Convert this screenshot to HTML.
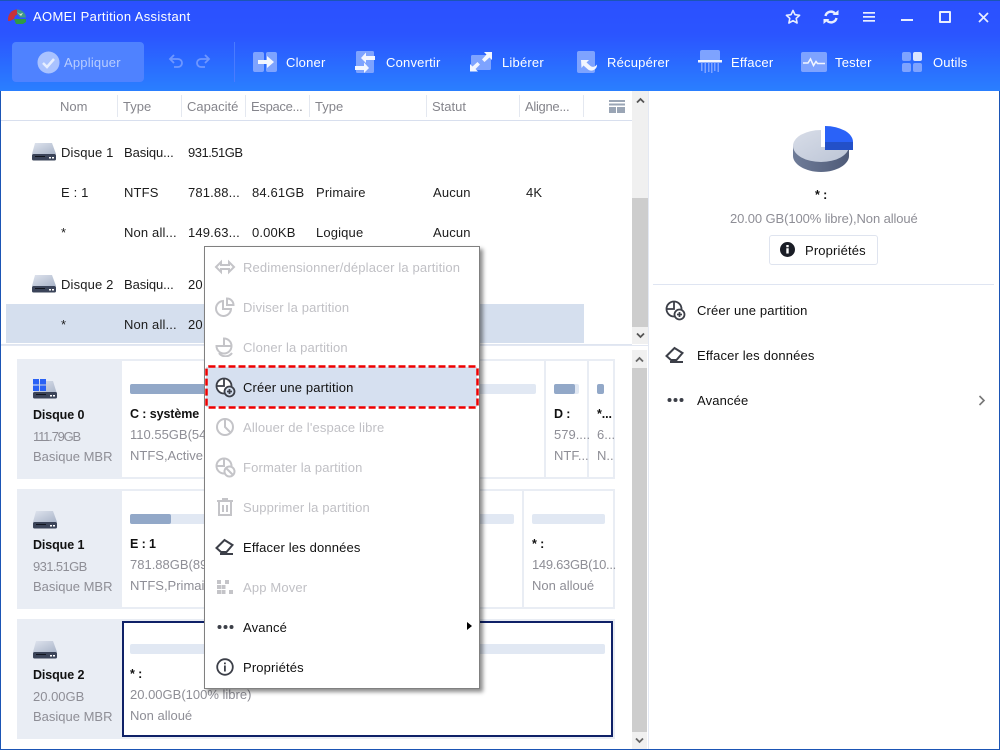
<!DOCTYPE html>
<html lang="fr"><head><meta charset="utf-8"><title>AOMEI Partition Assistant</title>
<style>
html,body{margin:0;padding:0;width:1000px;height:750px;overflow:hidden;background:#fff}
#a{position:relative;width:1000px;height:750px;overflow:hidden;background:#fff;font-family:"Liberation Sans",sans-serif;font-size:13px;letter-spacing:.15px;color:#1c1c1c}
#a div,#a svg{position:absolute}
.t{position:absolute;line-height:20px;height:20px;white-space:nowrap}
.g{color:#8e8e96;letter-spacing:0}
.h{color:#85858c;letter-spacing:0}
.w{color:#fff;letter-spacing:.2px}
.d{color:#c0c0c5}
.b{font-weight:bold;font-size:12.5px;letter-spacing:-.1px;color:#111}
.card{background:#e9edf4}
.p{background:#fff}
.tr{background:#e1e8f3;border-radius:2px}
.fl{background:#92a8c8;border-radius:2px}
.sep{background:#e4e8f0;width:1px;top:95px;height:22px}
</style></head><body><div id="a">

<div style="left:0;top:0;width:1000px;height:91px;background:linear-gradient(#2b50ff 0,#2b55ff 35px,#2a7fff 91px)"></div>
<div style="left:0;top:0;width:1000px;height:1px;background:#1b55b5"></div>
<div style="left:0;top:91px;width:1px;height:659px;background:#1b55b5"></div>
<div style="left:999px;top:91px;width:1px;height:659px;background:#1b55b5"></div>
<div style="left:0;top:749px;width:1000px;height:1px;background:#1b55b5"></div>

<svg style="left:7px;top:8px" width="20" height="17" viewBox="0 0 20 17"><path d="M1 13C.5 6 5 1.500 10 1.500L12 5 8 8 7 11 3 13z" fill="#c8323a"/><path d="M10 1.500c5 0 8.500 3.500 9 8l-6 0-3-4z" fill="#3e9a8a"/><path d="M7 11h12v3l-3 2H9z" fill="#2f9a45"/><path d="M10 4l3 2 3-1-2 3z" fill="#dfe8c8"/></svg>
<span class="t w" style="left:33px;top:7px;letter-spacing:.35px">AOMEI Partition Assistant</span>

<svg style="left:785px;top:9px" width="16" height="16" viewBox="0 0 16 16"><path d="M8 1.500l2 4.200 4.600.6-3.400 3.100.9 4.600L8 11.700 3.900 14l.9-4.600L1.400 6.300 6 5.700z" fill="none" stroke="#e8eeff" stroke-width="1.600" stroke-linejoin="round"/></svg>
<svg style="left:823px;top:9px" width="16" height="16" viewBox="0 0 16 16" fill="none" stroke="#e8eeff" stroke-width="2.400"><path d="M2.500 7A5.500 5.500 0 0 1 12 4.500"/><path d="M13.500 9A5.500 5.500 0 0 1 4 11.500"/><path d="M9.500 6h6V1z" fill="#e8eeff" stroke="none"/><path d="M6.500 10h-6v5z" fill="#e8eeff" stroke="none"/></svg>
<svg style="left:863px;top:11px" width="12" height="12" viewBox="0 0 12 12" fill="#e8eeff"><rect y="1" width="12" height="1.700"/><rect y="5" width="12" height="1.700"/><rect y="9" width="12" height="1.700"/></svg>
<div style="left:901px;top:19px;width:12px;height:2px;background:#e8eeff"></div>
<div style="left:939px;top:11px;width:8px;height:8px;border:2px solid #e8eeff;border-radius:1px"></div>
<svg style="left:978px;top:12px" width="11" height="11" viewBox="0 0 11 11"><path d="M1 1l9 9M10 1l-9 9" stroke="#e8eeff" stroke-width="1.700"/></svg>

<div style="left:12px;top:42px;width:132px;height:40px;background:#4f82ff;border-radius:4px"></div>
<svg style="left:37px;top:51px" width="23" height="23" viewBox="0 0 23 23"><circle cx="11.500" cy="11.500" r="11" fill="#a9c2ff"/><path d="M6 12l4 4 7-8" fill="none" stroke="#e6eeff" stroke-width="2.500"/></svg>
<span class="t" style="left:64px;top:53px;color:#b9cdff;letter-spacing:.2px">Appliquer</span>
<svg style="left:168px;top:54px" width="17" height="15" viewBox="0 0 17 15" fill="none" stroke="#6f97ff" stroke-width="1.800"><path d="M2 5h8a4 4 0 0 1 0 8H6"/><path d="M6 1L2 5l4 4"/></svg>
<svg style="left:194px;top:54px" width="17" height="15" viewBox="0 0 17 15" fill="none" stroke="#6f97ff" stroke-width="1.800"><path d="M15 5H7a4 4 0 0 0 0 8h4"/><path d="M11 1l4 4-4 4"/></svg>
<div style="left:234px;top:42px;width:1px;height:40px;background:#4a7bff"></div>

<svg style="left:253px;top:52px" width="25" height="21" viewBox="0 0 25 21"><rect x="0" y="0" width="11" height="20" rx="2" fill="#7ea3ff"/><rect x="13" y="0" width="11" height="20" rx="2" fill="#7ea3ff"/><path d="M5 8h9V4l7 6-7 6v-4H5z" fill="#f3f6ff"/></svg>
<span class="t w" style="left:286px;top:53px">Cloner</span>
<svg style="left:355px;top:51px" width="21" height="23" viewBox="0 0 21 23"><rect x="1" y="0" width="18" height="22" rx="1.500" fill="#7ea3ff"/><path d="M20 5h-9V1.500L6 7l5 5V9h9zM0 15h9v-3.500L14 17l-5 5v-3H0z" fill="#f3f6ff"/></svg>
<span class="t w" style="left:386px;top:53px">Convertir</span>
<svg style="left:470px;top:52px" width="22" height="20" viewBox="0 0 22 20"><rect x="1" y="3" width="20" height="15" rx="1.500" fill="#7ea3ff"/><path d="M14 0h8v8l-2.500-2.500-5 4.500-2.500-2.500 4.500-5zM0 12l2.500 2.500 5-4.500L10 12.500 5.500 17 8 19.500H0z" fill="#f3f6ff"/></svg>
<span class="t w" style="left:502px;top:53px">Libérer</span>
<svg style="left:577px;top:51px" width="22" height="23" viewBox="0 0 22 23"><rect x="0" y="0" width="18" height="22" rx="2" fill="#7ea3ff"/><path d="M4 9h8l-2.500 2.500 4 3.500c2 1.500 4.500 1 6.500-1.500.5 4.500-5 8-9 5l-4.500-4L4.500 17z" fill="#f3f6ff"/></svg>
<span class="t w" style="left:607px;top:53px">Récupérer</span>
<svg style="left:698px;top:50px" width="24" height="24" viewBox="0 0 24 24"><rect x="2" y="0" width="20" height="11" rx="2" fill="#7ea3ff"/><rect x="0" y="10" width="24" height="2.500" fill="#f3f6ff"/><path d="M3 13h1.500v8H3zM6.500 13H8v10H6.500zM10 13h1.500v9H10zM13 13h1.500v10H13zM16 13h1.500v8H16zM19.500 13H21v9h-1.500z" fill="#7ea3ff"/></svg>
<span class="t w" style="left:731px;top:53px">Effacer</span>
<svg style="left:801px;top:52px" width="26" height="20" viewBox="0 0 26 20"><rect width="26" height="20" rx="2" fill="#7ea3ff"/><path d="M2 11h5l2.500-4 3 6.500 2.500-4 1.500 2H24" fill="none" stroke="#f3f6ff" stroke-width="1.500"/></svg>
<span class="t w" style="left:835px;top:53px">Tester</span>
<svg style="left:902px;top:52px" width="20" height="20" viewBox="0 0 20 20"><rect width="9" height="9" rx="2" fill="#7ea3ff"/><rect x="11" width="9" height="9" rx="2" fill="#dbe5ff"/><rect y="11" width="9" height="9" rx="2" fill="#7ea3ff"/><rect x="11" y="11" width="9" height="9" rx="2" fill="#7ea3ff"/></svg>
<span class="t w" style="left:933px;top:53px">Outils</span>

<div style="left:1px;top:120px;width:631px;height:1px;background:#d8dfee"></div>
<div class="sep" style="left:117px"></div><div class="sep" style="left:181px"></div><div class="sep" style="left:245px"></div><div class="sep" style="left:309px"></div><div class="sep" style="left:426px"></div><div class="sep" style="left:519px"></div><div class="sep" style="left:583px"></div>
<span class="t h" style="left:60px;top:97px">Nom</span>
<span class="t h" style="left:123px;top:97px">Type</span>
<span class="t h" style="left:187px;top:97px">Capacité</span>
<span class="t h" style="left:251px;top:97px;letter-spacing:-.3px">Espace...</span>
<span class="t h" style="left:315px;top:97px">Type</span>
<span class="t h" style="left:432px;top:97px">Statut</span>
<span class="t h" style="left:525px;top:97px;letter-spacing:-.3px">Aligne...</span>
<svg style="left:609px;top:100px" width="16" height="13" viewBox="0 0 16 13" fill="#9aa5b5"><rect width="16" height="2"/><rect y="3.500" width="16" height="2"/><rect y="7" width="7" height="6"/><rect x="8" y="7" width="8" height="6"/></svg>

<div style="left:6px;top:304px;width:578px;height:39px;background:#d5dfee"></div>
<div style="left:1px;top:344px;width:631px;height:1px;background:#dfe5f0"></div>

<svg style="left:32px;top:143px" width="24" height="18" viewBox="0 0 24 18"><defs><linearGradient id="dk" x1="0" y1="0" x2="1" y2="1"><stop offset="0" stop-color="#dfe4ee"/><stop offset="1" stop-color="#a9b4c8"/></linearGradient></defs><path d="M3 0h17l4 11H0z" fill="url(#dk)"/><rect y="11" width="24" height="6.500" rx="1.500" fill="#3b4459"/><rect x="3" y="13" width="10" height="1" fill="#11151f"/><rect x="17" y="14" width="2" height="1.500" fill="#fff"/><rect x="20" y="14" width="2" height="1.500" fill="#fff"/></svg>
<svg style="left:32px;top:275px" width="24" height="18" viewBox="0 0 24 18"><path d="M3 0h17l4 11H0z" fill="url(#dk)"/><rect y="11" width="24" height="6.500" rx="1.500" fill="#3b4459"/><rect x="3" y="13" width="10" height="1" fill="#11151f"/><rect x="17" y="14" width="2" height="1.500" fill="#fff"/><rect x="20" y="14" width="2" height="1.500" fill="#fff"/></svg>

<span class="t" style="left:61px;top:143px">Disque 1</span><span class="t" style="left:124px;top:143px;letter-spacing:-.1px">Basiqu...</span><span class="t" style="left:188px;top:143px;letter-spacing:-.5px">931.51GB</span>
<span class="t" style="left:61px;top:183px">E : 1</span><span class="t" style="left:124px;top:183px">NTFS</span><span class="t" style="left:188px;top:183px">781.88...</span><span class="t" style="left:252px;top:183px">84.61GB</span><span class="t" style="left:316px;top:183px">Primaire</span><span class="t" style="left:433px;top:183px">Aucun</span><span class="t" style="left:526px;top:183px">4K</span>
<span class="t" style="left:61px;top:223px">*</span><span class="t" style="left:124px;top:223px">Non all...</span><span class="t" style="left:188px;top:223px">149.63...</span><span class="t" style="left:252px;top:223px">0.00KB</span><span class="t" style="left:316px;top:223px">Logique</span><span class="t" style="left:433px;top:223px">Aucun</span>
<span class="t" style="left:61px;top:275px">Disque 2</span><span class="t" style="left:124px;top:275px;letter-spacing:-.1px">Basiqu...</span><span class="t" style="left:188px;top:275px">20.00GB</span>
<span class="t" style="left:61px;top:315px">*</span><span class="t" style="left:124px;top:315px">Non all...</span><span class="t" style="left:188px;top:315px">20.00GB</span>

<div style="left:632px;top:91px;width:16px;height:253px;background:#f0f0f0"></div>
<div style="left:632px;top:198px;width:16px;height:129px;background:#cdcdcd"></div>
<svg style="left:636px;top:97px" width="9" height="7" viewBox="0 0 9 7"><path d="M1 5.500l3.500-3.500 3.500 3.500" fill="none" stroke="#555" stroke-width="1.800"/></svg>
<svg style="left:636px;top:332px" width="9" height="7" viewBox="0 0 9 7"><path d="M1 1.500l3.500 3.500 3.500-3.500" fill="none" stroke="#555" stroke-width="1.800"/></svg>

<div style="left:648px;top:91px;width:1px;height:658px;background:#e3e8f3"></div>
<div style="left:1px;top:345px;width:647px;height:1px;background:#e3e8f3"></div>

<div class="card" style="left:17px;top:359px;width:598px;height:120px"></div>
<div class="p" style="left:122px;top:361px;width:422px;height:116px"></div>
<div class="p" style="left:546px;top:361px;width:41px;height:116px"></div>
<div class="p" style="left:589px;top:361px;width:24px;height:116px"></div>
<div class="tr" style="left:130px;top:384px;width:406px;height:10px"></div>
<div class="fl" style="left:130px;top:384px;width:190px;height:10px"></div>
<div class="tr" style="left:554px;top:384px;width:25px;height:10px"></div>
<div class="fl" style="left:554px;top:384px;width:21px;height:10px"></div>
<div class="fl" style="left:597px;top:384px;width:7px;height:10px"></div>
<svg style="left:33px;top:379px" width="24" height="20" viewBox="0 0 24 20"><path d="M6 2h14l4 13H0z" fill="url(#dk)"/><rect y="13" width="24" height="6.500" rx="1.500" fill="#3b4459"/><rect x="3" y="15" width="10" height="1" fill="#11151f"/><rect x="17" y="16" width="2" height="1.500" fill="#fff"/><rect x="20" y="16" width="2" height="1.500" fill="#fff"/><path d="M0 0h6v5.500H0zM7 0h6v5.500H7zM0 6.500h6V12H0zM7 6.500h6V12H7z" fill="#2a62f5"/></svg>
<span class="t b" style="left:33px;top:405px">Disque 0</span>
<span class="t g" style="left:33px;top:427px;letter-spacing:-1.200px">111.79GB</span>
<span class="t g" style="left:33px;top:447px">Basique MBR</span>
<span class="t b" style="left:130px;top:404px">C : système</span>
<span class="t g" style="left:130px;top:425px">110.55GB(54%</span>
<span class="t g" style="left:130px;top:446px">NTFS,Active,</span>
<span class="t b" style="left:554px;top:404px">D :</span>
<span class="t g" style="left:554px;top:425px">579....</span>
<span class="t g" style="left:554px;top:446px">NTF...</span>
<span class="t b" style="left:597px;top:404px">*...</span>
<span class="t g" style="left:597px;top:425px">6...</span>
<span class="t g" style="left:597px;top:446px">N..</span>

<div class="card" style="left:17px;top:489px;width:598px;height:120px"></div>
<div class="p" style="left:122px;top:491px;width:400px;height:116px"></div>
<div class="p" style="left:524px;top:491px;width:89px;height:116px"></div>
<div class="tr" style="left:130px;top:514px;width:384px;height:10px"></div>
<div class="fl" style="left:130px;top:514px;width:41px;height:10px"></div>
<div class="tr" style="left:532px;top:514px;width:73px;height:10px"></div>
<svg style="left:33px;top:511px" width="24" height="18" viewBox="0 0 24 18"><path d="M3 0h17l4 11H0z" fill="url(#dk)"/><rect y="11" width="24" height="6.500" rx="1.500" fill="#3b4459"/><rect x="3" y="13" width="10" height="1" fill="#11151f"/><rect x="17" y="14" width="2" height="1.500" fill="#fff"/><rect x="20" y="14" width="2" height="1.500" fill="#fff"/></svg>
<span class="t b" style="left:33px;top:535px">Disque 1</span>
<span class="t g" style="left:33px;top:557px;letter-spacing:-.6px">931.51GB</span>
<span class="t g" style="left:33px;top:577px">Basique MBR</span>
<span class="t b" style="left:130px;top:534px">E : 1</span>
<span class="t g" style="left:130px;top:555px">781.88GB(89</span>
<span class="t g" style="left:130px;top:576px">NTFS,Primai</span>
<span class="t b" style="left:532px;top:534px">* :</span>
<span class="t g" style="left:532px;top:555px;letter-spacing:-.3px">149.63GB(10...</span>
<span class="t g" style="left:532px;top:576px">Non alloué</span>

<div class="card" style="left:17px;top:619px;width:598px;height:120px"></div>
<div class="p" style="left:122px;top:621px;width:487px;height:112px;border:2px solid #0f2167"></div>
<div class="tr" style="left:130px;top:644px;width:475px;height:10px"></div>
<svg style="left:33px;top:641px" width="24" height="18" viewBox="0 0 24 18"><path d="M3 0h17l4 11H0z" fill="url(#dk)"/><rect y="11" width="24" height="6.500" rx="1.500" fill="#3b4459"/><rect x="3" y="13" width="10" height="1" fill="#11151f"/><rect x="17" y="14" width="2" height="1.500" fill="#fff"/><rect x="20" y="14" width="2" height="1.500" fill="#fff"/></svg>
<span class="t b" style="left:33px;top:665px">Disque 2</span>
<span class="t g" style="left:33px;top:687px">20.00GB</span>
<span class="t g" style="left:33px;top:707px">Basique MBR</span>
<span class="t b" style="left:130px;top:664px">* :</span>
<span class="t g" style="left:130px;top:685px">20.00GB(100% libre)</span>
<span class="t g" style="left:130px;top:706px">Non alloué</span>

<div style="left:632px;top:350px;width:15px;height:399px;background:#f0f0f0"></div>
<div style="left:632px;top:368px;width:15px;height:364px;background:#cdcdcd"></div>
<svg style="left:635px;top:356px" width="9" height="7" viewBox="0 0 9 7"><path d="M1 5.500l3.500-3.500 3.500 3.500" fill="none" stroke="#666" stroke-width="1.800"/></svg>
<svg style="left:635px;top:737px" width="9" height="7" viewBox="0 0 9 7"><path d="M1 1.500l3.500 3.500 3.500-3.500" fill="none" stroke="#666" stroke-width="1.800"/></svg>

<div style="left:204px;top:246px;width:274px;height:441px;background:#fff;border:1px solid #808080;box-shadow:3px 3px 4px rgba(0,0,0,.45)"></div>
<div style="left:206px;top:367px;width:271px;height:40px;background:#d6e0f0"></div>
<svg style="left:205px;top:365px" width="274" height="44" viewBox="0 0 274 44"><rect x="1.500" y="1.500" width="271" height="41" rx="2" fill="none" stroke="#ee0000" stroke-width="2.500" stroke-dasharray="7 3"/></svg>

<svg style="left:214px;top:259px" width="22" height="16" viewBox="0 0 22 16" fill="none" stroke="#c4c4c8" stroke-width="2"><path d="M2 8l5-5v3h8V3l5 5-5 5v-3H7v3z"/></svg>
<span class="t d" style="left:243px;top:258px">Redimensionner/déplacer la partition</span>
<svg style="left:215px;top:297px" width="20" height="20" viewBox="0 0 20 20" fill="none" stroke="#c4c4c8" stroke-width="2"><path d="M8 4a7.500 7.500 0 1 0 8 8H8z"/><path d="M12 1.500a6.500 6.500 0 0 1 6.500 6.500H12z"/></svg>
<span class="t d" style="left:243px;top:298px">Diviser la partition</span>
<svg style="left:215px;top:337px" width="20" height="20" viewBox="0 0 20 20" fill="none" stroke="#c4c4c8" stroke-width="2"><path d="M9 1.500a7.500 7.500 0 1 1-7.500 7.500H9z"/><path d="M9 9h7.500"/><path d="M4 16a8 8 0 0 0 13 0"/></svg>
<span class="t d" style="left:243px;top:338px">Cloner la partition</span>
<svg style="left:215px;top:377px" width="21" height="21" viewBox="0 0 21 21" fill="none" stroke="#3c3f48" stroke-width="1.800"><circle cx="9" cy="9" r="7.500" fill="#fff"/><path d="M9 1.500V9H1.500"/><circle cx="14.500" cy="14.500" r="5" fill="#d6e0f0"/><path d="M12 14.500h5M14.500 12v5"/></svg>
<span class="t" style="left:243px;top:378px;color:#111">Créer une partition</span>
<svg style="left:215px;top:417px" width="20" height="20" viewBox="0 0 20 20" fill="none" stroke="#c4c4c8" stroke-width="2"><circle cx="10" cy="10" r="8"/><path d="M10 2v8l5 5"/></svg>
<span class="t d" style="left:243px;top:418px">Allouer de l'espace libre</span>
<svg style="left:215px;top:457px" width="21" height="21" viewBox="0 0 21 21" fill="none" stroke="#c4c4c8" stroke-width="2"><circle cx="9" cy="9" r="7.500"/><path d="M9 1.500V9H1.500"/><circle cx="14.500" cy="14.500" r="5" fill="#fff"/><path d="M11 11l7 7"/></svg>
<span class="t d" style="left:243px;top:458px">Formater la partition</span>
<svg style="left:216px;top:498px" width="18" height="18" viewBox="0 0 18 18" fill="none" stroke="#c4c4c8" stroke-width="2"><path d="M1 3h16M6 1h6M3 3v14h12V3M7 7v7M11 7v7"/></svg>
<span class="t d" style="left:243px;top:498px">Supprimer la partition</span>
<svg style="left:215px;top:538px" width="20" height="18" viewBox="0 0 20 18" fill="none" stroke="#3c3f48" stroke-width="2"><path d="M1.500 10l8-8 8 5-6 7H6z"/><path d="M5 16h13"/></svg>
<span class="t" style="left:243px;top:538px;color:#111">Effacer les données</span>
<svg style="left:217px;top:580px" width="17" height="14" viewBox="0 0 17 14" fill="#c4c4c8"><rect width="4" height="4"/><rect x="8" width="4" height="4"/><rect y="5" width="4" height="4"/><rect x="4.500" y="5" width="4" height="4"/><rect y="10" width="4" height="4"/><rect x="4.500" y="10" width="4" height="4"/><rect x="12" y="10" width="4" height="4"/></svg>
<span class="t d" style="left:243px;top:578px">App Mover</span>
<svg style="left:217px;top:624px" width="17" height="6" viewBox="0 0 17 6" fill="#3c3f48"><circle cx="2.500" cy="3" r="2"/><circle cx="8.500" cy="3" r="2"/><circle cx="14.500" cy="3" r="2"/></svg>
<span class="t" style="left:243px;top:618px;color:#111">Avancé</span>
<svg style="left:467px;top:622px" width="5" height="8" viewBox="0 0 5 8"><path d="M0 0l5 4-5 4z" fill="#000"/></svg>
<svg style="left:216px;top:658px" width="18" height="18" viewBox="0 0 18 18"><circle cx="9" cy="9" r="7.800" fill="none" stroke="#3c3f48" stroke-width="1.800"/><path d="M8 7.500h1.800V13.500H8zM8 4.500h1.800v1.800H8z" fill="#3c3f48"/></svg>
<span class="t" style="left:243px;top:658px;color:#111">Propriétés</span>

<svg style="left:790px;top:124px" width="66" height="50" viewBox="0 0 66 50"><defs><linearGradient id="pt" x1="0" y1="0" x2="1" y2="1"><stop offset="0" stop-color="#d8dde8"/><stop offset="1" stop-color="#bcc5d6"/></linearGradient><linearGradient id="ps" x1="0" y1="0" x2="1" y2="0"><stop offset="0" stop-color="#6f7c98"/><stop offset="1" stop-color="#4f5b78"/></linearGradient></defs><path d="M3 22v10c0 8 12 16 28 16s28-8 28-16V22z" fill="url(#ps)"/><ellipse cx="31" cy="22" rx="28" ry="16" fill="url(#pt)"/><rect x="31" y="0" width="35" height="23" fill="#fff"/><path d="M35 2A28 16 0 0 1 63 18V26H35z" fill="#2a62f8"/><path d="M35 18H63V26H35z" fill="#2350c8"/></svg>
<span class="t b" style="left:815px;top:185px">* :</span>
<span class="t g" style="left:730px;top:209px;letter-spacing:-.1px">20.00 GB(100% libre),Non alloué</span>
<div style="left:769px;top:235px;width:107px;height:28px;border:1px solid #dfe4ef;border-radius:3px;background:#fff"></div>
<svg style="left:780px;top:242px" width="15" height="15" viewBox="0 0 15 15"><circle cx="7.500" cy="7.500" r="7.500" fill="#1a1d26"/><path d="M6.300 6.200h2.400v5.300H6.300zM6.300 3h2.400v2.200H6.300z" fill="#fff"/></svg>
<span class="t" style="left:805px;top:241px;color:#111">Propriétés</span>
<div style="left:653px;top:284px;width:341px;height:1px;background:#dfe5f2"></div>

<svg style="left:665px;top:300px" width="21" height="21" viewBox="0 0 21 21" fill="none" stroke="#3c3f48" stroke-width="1.800"><circle cx="9" cy="9" r="7.500"/><path d="M9 1.500V9H1.500"/><circle cx="14.500" cy="14.500" r="5" fill="#fff"/><path d="M12 14.500h5M14.500 12v5"/></svg>
<span class="t" style="left:697px;top:301px;color:#111">Créer une partition</span>
<svg style="left:665px;top:346px" width="20" height="18" viewBox="0 0 20 18" fill="none" stroke="#3c3f48" stroke-width="2"><path d="M1.500 10l8-8 8 5-6 7H6z"/><path d="M5 16h13"/></svg>
<span class="t" style="left:697px;top:346px;color:#111">Effacer les données</span>
<svg style="left:667px;top:397px" width="17" height="6" viewBox="0 0 17 6" fill="#3c3f48"><circle cx="2.500" cy="3" r="2"/><circle cx="8.500" cy="3" r="2"/><circle cx="14.500" cy="3" r="2"/></svg>
<span class="t" style="left:697px;top:391px;color:#111">Avancée</span>
<svg style="left:978px;top:395px" width="8" height="11" viewBox="0 0 8 11"><path d="M1.500 1l4.500 4.500-4.500 4.500" fill="none" stroke="#777" stroke-width="1.600"/></svg>

</div></body></html>
